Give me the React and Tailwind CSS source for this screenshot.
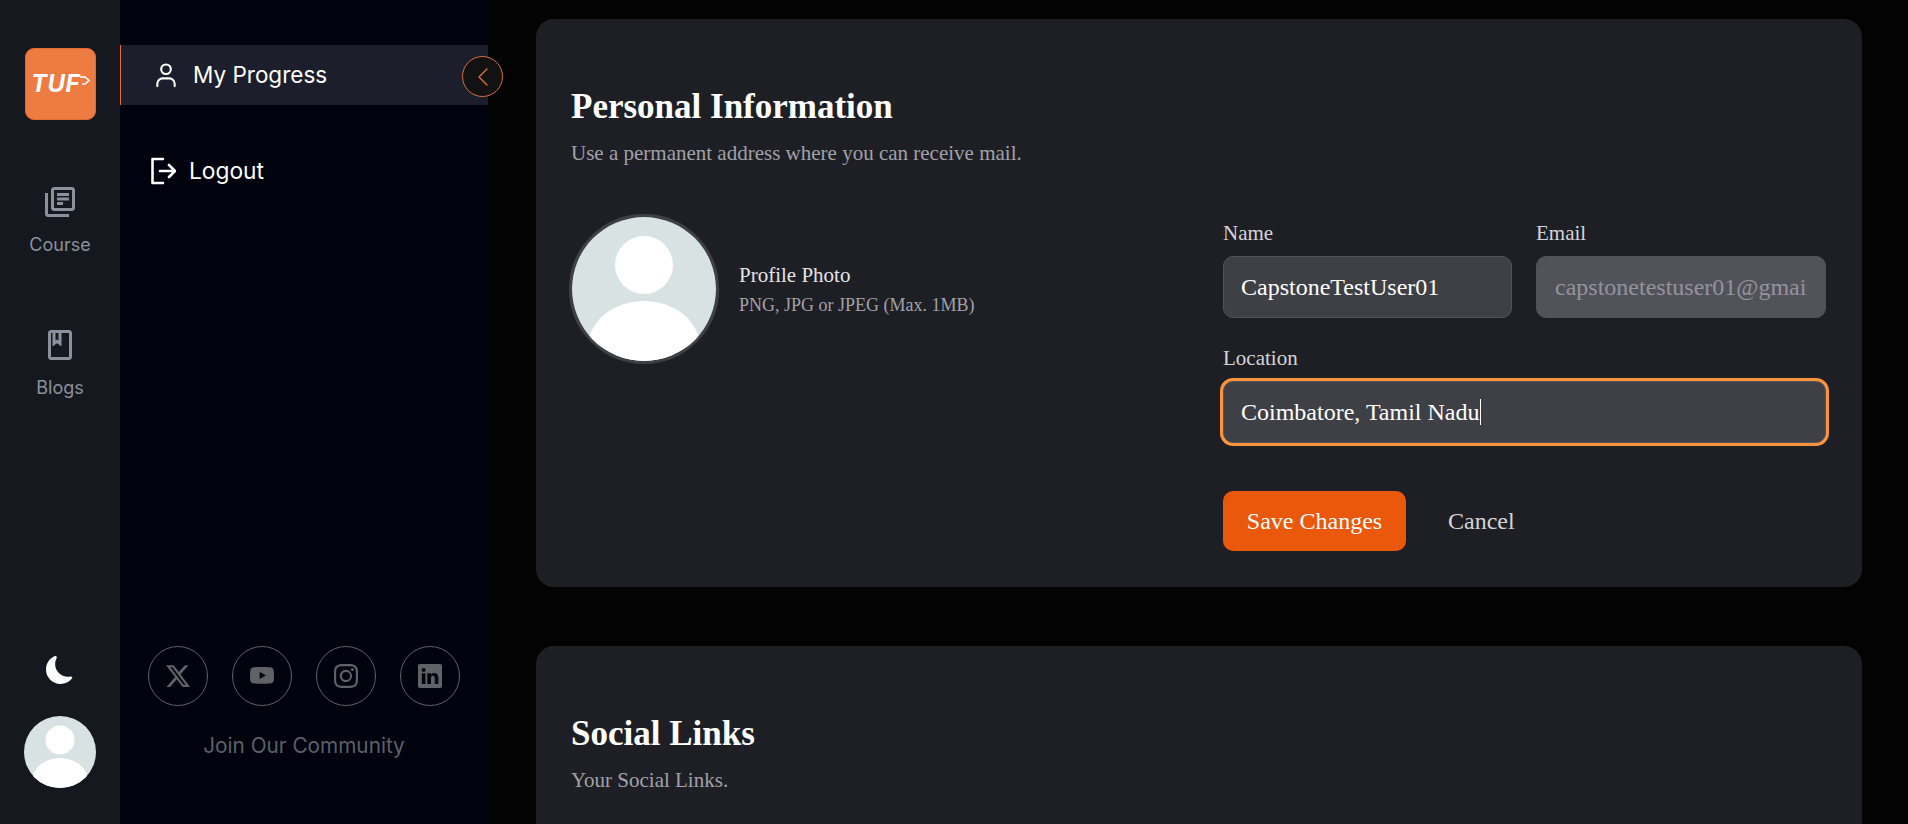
import React from "react";
import { ChevronLeft } from "lucide-react";
import { MdOutlineLibraryBooks, MdOutlineBook } from "react-icons/md";
import { BsMoonFill, BsTwitterX, BsYoutube, BsInstagram, BsLinkedin } from "react-icons/bs";

const sansFont = "font-['Inter',sans-serif]";

const Avatar = ({ className }) => (
  <svg viewBox="0 0 72 72" className={className}>
    <clipPath id="avatar-clip">
      <circle cx="36" cy="36" r="36" />
    </clipPath>
    <g clipPath="url(#avatar-clip)">
      <rect width="72" height="72" fill="#d9e2e3" />
      <circle cx="36" cy="24" r="14.5" fill="#fff" />
      <ellipse cx="36" cy="65" rx="28" ry="23" fill="#fff" />
    </g>
  </svg>
);

const RailItem = ({ icon: Icon, label }) => (
  <div className="flex flex-col items-center">
    <Icon className="text-[#8b919c]" size={36} />
    <span className="mt-[13px] text-[18px] leading-6 text-[#8b919c]">{label}</span>
  </div>
);

const SocialLink = ({ children }) => (
  <div className="flex h-[60px] w-[60px] items-center justify-center rounded-full border border-[#5f6166] text-[#5f6368]">
    {children}
  </div>
);

const Field = ({ label, children }) => (
  <div>
    <label className="mb-[11px] block text-[21px] leading-[24px] text-[#d4d4d8]">{label}</label>
    {children}
  </div>
);

const inputClass =
  "h-[62px] w-full rounded-[10px] border pl-[17px] pr-[18px] font-['Liberation_Serif',serif] text-[24px] outline-none";

const Card = ({ title, subtitle, children }) => (
  <section className="rounded-[18px] bg-[#1e1f24] pb-[36px] pl-[35px] pr-[36px] pt-[69px]">
    <h2 className="text-[35px] font-bold leading-[38px] text-white">{title}</h2>
    <p className="mt-[15px] text-[21px] leading-[24px] text-[#a1a1aa]">{subtitle}</p>
    {children}
  </section>
);

const App = () => {
  return (
    <div className="flex h-screen overflow-hidden bg-[#030303] font-['Liberation_Serif',serif]">
      {/* icon rail */}
      <aside className={`flex w-[120px] shrink-0 flex-col items-center bg-[#15181f] pt-[48px] ${sansFont}`}>
        <div className="flex h-[72px] w-[71px] items-center justify-center rounded-[9px] border border-[#e8692f] bg-[#ee7b42] pl-[1px]">
          <span className="text-[24px] font-bold italic leading-none tracking-[0.5px] text-white">TUF</span>
          <svg viewBox="0 0 10 9" className="mb-[7px] h-[9px] w-[10px]" fill="none" stroke="#fff" strokeWidth="1.6">
            <path d="M0 1h5l4 3.5L5 8H2" />
          </svg>
        </div>
        <div className="mt-[64px] flex flex-col gap-[70px]">
          <RailItem icon={MdOutlineLibraryBooks} label="Course" />
          <RailItem icon={MdOutlineBook} label="Blogs" />
        </div>
        <div className="mt-auto flex flex-col items-center pb-[36px]">
          <BsMoonFill className="text-white" size={28} />
          <Avatar className="mt-[32px] h-[72px] w-[72px]" />
        </div>
      </aside>

      {/* text sidebar */}
      <aside className={`relative flex w-[368px] shrink-0 flex-col bg-[#00020e] pt-[45px] ${sansFont}`}>
        <div className="flex h-[60px] items-center gap-[17px] border-l border-[#e8692f] bg-[#1c1f2b] pl-[35px] text-white">
          <svg viewBox="0 0 20 26" className="h-[25px] w-[20px]" fill="none" stroke="#fff" strokeWidth="2.2" strokeLinecap="round">
            <circle cx="10" cy="6.5" r="5" />
            <path d="M1 24v-2.5A5.5 5.5 0 0 1 6.5 16h7a5.5 5.5 0 0 1 5.5 5.5V24" />
          </svg>
          <span className="text-[22.5px] leading-none">My Progress</span>
        </div>
        <div className="absolute left-[342px] top-[56px] flex h-[41px] w-[41px] items-center justify-center rounded-full border border-[#d9703a] bg-[#121212]">
          <ChevronLeft className="text-[#d9703a]" size={32} strokeWidth={1} />
        </div>
        <div className="mt-[52px] flex items-center gap-[13px] pl-[30px] text-white">
          <svg viewBox="0 0 26 28" className="h-[28px] w-[26px]" fill="none" stroke="#fff" strokeWidth="2.6" strokeLinecap="round" strokeLinejoin="round">
            <path d="M13 2H2.5v24H13" />
            <path d="M10 14h15M19 8l6 6-6 6" />
          </svg>
          <span className="text-[22.75px] leading-none">Logout</span>
        </div>
        <div className="mt-auto flex flex-col items-center pb-[66px]">
          <div className="flex gap-[24px]">
            <SocialLink><BsTwitterX size={24} /></SocialLink>
            <SocialLink><BsYoutube size={24} /></SocialLink>
            <SocialLink><BsInstagram size={24} /></SocialLink>
            <SocialLink><BsLinkedin size={24} /></SocialLink>
          </div>
          <p className="mt-[28px] text-[20.75px] leading-6 text-[#5b6068]">Join Our Community</p>
        </div>
      </aside>

      {/* main content */}
      <main className="flex-1 overflow-hidden pl-[48px] pr-[46px] pt-[19px]">
        <div className="flex flex-col gap-[59px]">
          <Card title="Personal Information" subtitle="Use a permanent address where you can receive mail.">
            <div className="mt-[49px] flex items-start justify-between">
              <div className="-ml-[2px] flex items-center gap-[20px]">
                <div className="h-[150px] w-[150px] rounded-full border-[3px] border-[#3f3f46]">
                  <Avatar className="h-full w-full" />
                </div>
                <div className="pt-[2px]">
                  <p className="text-[21px] leading-[24px] text-[#e4e4e7]">Profile Photo</p>
                  <p className="mt-[6px] text-[18px] leading-[24px] text-[#a1a1aa]">PNG, JPG or JPEG (Max. 1MB)</p>
                </div>
              </div>
              <div className="w-[603px] pt-[7px]">
                <div className="grid grid-cols-[289px_1fr] gap-x-[24px] gap-y-[28px]">
                  <Field label="Name">
                    <input readOnly value="CapstoneTestUser01" className={`${inputClass} border-[#52525b] bg-[#3f3f46] text-white`} />
                  </Field>
                  <Field label="Email">
                    <input disabled value="capstonetestuser01@gmail.com" className={`${inputClass} border-[#52525b] bg-[#52525b] pl-[18px] text-[#94949c]`} />
                  </Field>
                  <div className="col-span-2">
                    <Field label="Location">
                      <div className={`${inputClass} flex items-center border-[#52525b] bg-[#3f3f46] text-white ring-[3px] ring-[#fb923c]`}>
                        Coimbatore, Tamil Nadu
                        <span className="h-[26px] w-px bg-white" />
                      </div>
                    </Field>
                  </div>
                </div>
                <div className="mt-[48px] flex items-center gap-[42px]">
                  <button className="h-[60px] w-[183px] rounded-[10px] bg-[#ea580c] text-[24px] text-white">Save Changes</button>
                  <button className="text-[24px] text-[#d4d4d8]">Cancel</button>
                </div>
              </div>
            </div>
          </Card>
          <Card title="Social Links" subtitle="Your Social Links.">
            <div className="h-[300px]" />
          </Card>
        </div>
      </main>
    </div>
  );
};

export default App;
